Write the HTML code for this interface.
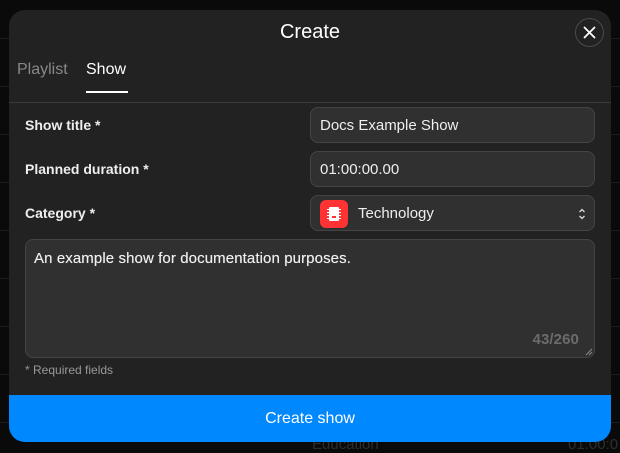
<!DOCTYPE html>
<html><head><style>
*{box-sizing:border-box;margin:0;padding:0}
body{width:620px;height:452px;background:#0a0a0a;font-family:"Liberation Sans",sans-serif;position:relative;overflow:hidden}
.bgt{position:absolute;color:#2e2e2e;font-size:14px}
.bgl{position:absolute;left:0;right:0;height:1px;background:#1c1c1c}
.modal{position:absolute;left:9px;top:10px;width:602px;height:432px;background:#222;border-radius:16px;overflow:hidden}
.title{position:absolute;top:11px;width:100%;text-align:center;color:#fff;font-size:20px}
.close{position:absolute;left:566px;top:8px;width:29px;height:29px;border:1px solid #4a4a4a;border-radius:50%;}
.tab{position:absolute;top:51px;font-size:16px}
.sep{position:absolute;left:0;right:0;top:92px;height:1px;background:#3a3a3a}
.lbl{position:absolute;left:16px;color:#eee;font-size:14px;font-weight:bold}
.inp{position:absolute;left:301px;width:285px;height:36px;background:#303030;border:1px solid #444;border-radius:8px;color:#eee;font-size:15px;padding:9px 0 0 9px}
.ta{position:absolute;left:16px;top:229px;width:570px;height:119px;background:#303030;border:1px solid #444;border-radius:8px;color:#eee;font-size:15px;padding:10px 0 0 8px;letter-spacing:0.1px;text-shadow:0 0 0.4px #eee}
.btn{position:absolute;left:0;top:385px;width:602px;height:47px;background:#0088ff;color:#fff;font-size:16px;text-align:center;line-height:47px}
</style></head><body>
<div class="bgl" style="top:38px"></div><div class="bgl" style="top:86px"></div><div class="bgl" style="top:134px"></div><div class="bgl" style="top:182px"></div><div class="bgl" style="top:230px"></div><div class="bgl" style="top:278px"></div><div class="bgl" style="top:326px"></div><div class="bgl" style="top:374px"></div><div class="bgl" style="top:422px"></div>
<div class="bgt" style="left:312px;top:436px;font-size:15px">Education</div>
<div class="bgt" style="left:568px;top:436px;font-size:15px">01:00:0</div>
<div class="modal">
<div class="title">Create</div>
<div class="close"><svg width="27" height="27" viewBox="0 0 27 27" style="position:absolute;left:0;top:0"><path d="M8.5 8.5L18.5 18.5M18.5 8.5L8.5 18.5" stroke="#fff" stroke-width="1.8" stroke-linecap="round"/></svg></div>
<div class="tab" style="left:8px;color:#888">Playlist</div>
<div class="tab" style="left:77px;color:#fff">Show</div>
<div style="position:absolute;left:77px;top:81px;width:42px;height:2px;background:#fff"></div>
<div class="sep"></div>
<div class="lbl" style="top:107px">Show title *</div>
<div class="lbl" style="top:151px">Planned duration *</div>
<div class="lbl" style="top:195px">Category *</div>
<div class="inp" style="top:97px">Docs Example Show</div>
<div class="inp" style="top:141px">01:00:00.00</div>
<div class="inp" style="top:185px;padding:0">
<div style="position:absolute;left:9px;top:4px;width:28px;height:28px;background:#f33;border-radius:6px">
<svg width="28" height="28" viewBox="0 0 28 28"><rect x="9" y="7" width="10" height="14" rx="1" fill="#fff"/><path d="M7 9.5h2M7 12.5h2M7 15.5h2M7 18.5h2M19 9.5h2M19 12.5h2M19 15.5h2M19 18.5h2" stroke="#fff" stroke-width="1"/><rect x="12" y="16" width="4" height="2" fill="#f33"/></svg></div>
<div style="position:absolute;left:47px;top:9px">Technology</div>
<svg style="position:absolute;right:8px;top:11px" width="8" height="14" viewBox="0 0 8 14"><path d="M1.5 5L4 2.5L6.5 5M1.5 9L4 11.5L6.5 9" stroke="#ddd" stroke-width="1.3" fill="none"/></svg>
</div>
<div class="ta">An example show for documentation purposes.
<div style="position:absolute;right:15px;bottom:9px;color:#6c6c6c;font-size:15px;font-weight:bold;text-shadow:none">43/260</div>
<svg style="position:absolute;right:1px;bottom:1px" width="8" height="8" viewBox="0 0 8 8"><path d="M7 1L1 7M7 4L4 7" stroke="#888" stroke-width="1"/></svg></div>
<div style="position:absolute;left:16px;top:353px;color:#999;font-size:12px">* Required fields</div>
<div class="btn">Create show</div>
</div>
</body></html>
